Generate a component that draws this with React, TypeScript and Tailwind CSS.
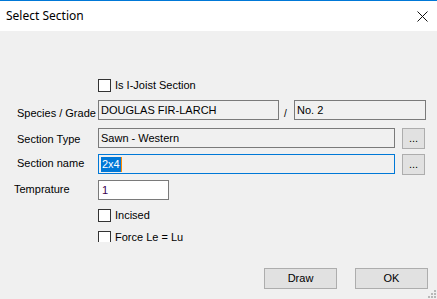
import React from 'react';

const ui = { fontFamily: '"Liberation Sans", Arial, sans-serif' };

function CheckRow({ label, top, clip }: { label: string; top: string; clip?: boolean }) {
  return (
    <div className={`flex items-start pl-[98px] ${top} ${clip ? 'h-[11px] overflow-hidden' : 'h-[13px]'}`}>
      <span className="w-[13px] h-[13px] border border-[#333333] bg-white shrink-0" />
      <span className="ml-[4px] text-[11px] leading-[13px] text-black">{label}</span>
    </div>
  );
}

function Field({ children, className }: { children?: React.ReactNode; className: string }) {
  return (
    <div className={`h-[20px] border flex items-center pl-[2px] text-[11px] text-black ${className}`}>
      {children}
    </div>
  );
}

function DotsButton() {
  return (
    <button className="ml-[7px] w-[23px] h-[21px] bg-[#e1e1e1] border border-[#adadad] text-[11px] leading-[10px] pb-[2px] text-black">
      ...
    </button>
  );
}

function Label({ text, className }: { text: string; className: string }) {
  return <span className={`w-[98px] shrink-0 text-[11px] leading-[13px] whitespace-nowrap ${className}`}>{text}</span>;
}

export default function App() {
  return (
    <div className="w-[437px] h-[299px] bg-[#f0f0f0] relative overflow-hidden" style={ui}>
      {/* Title bar */}
      <div className="h-[31px] bg-white border-t border-[#0078d7] flex items-center justify-between pl-[6px] pr-[8px]">
        <span className="text-[12px] text-black" style={{ fontFamily: '"Noto Sans", "Open Sans", sans-serif' }}>
          Select Section
        </span>
        <svg width="11" height="11" viewBox="0 0 11 11" className="mr-[1px]">
          <path d="M0.5 0.5 L10.5 10.5 M10.5 0.5 L0.5 10.5" stroke="#111" strokeWidth="1" />
        </svg>
      </div>

      <div className="flex flex-col">
        <CheckRow label="Is I-Joist Section" top="mt-[48px]" />

        {/* Species / Grade */}
        <div className="flex items-start h-[20px] mt-[8px]">
          <Label text="Species / Grade" className="pl-[17px] pt-[7px]" />
          <Field className="w-[181px] border-[#7a7a7a] bg-[#f0f0f0]">DOUGLAS FIR-LARCH</Field>
          <span className="w-[15px] pl-[5px] pt-[8px] text-[10px] leading-[12px]">/</span>
          <Field className="w-[132px] border-[#7a7a7a] bg-[#f0f0f0]">No. 2</Field>
        </div>

        {/* Section Type */}
        <div className="flex items-start h-[21px] mt-[8px]">
          <Label text="Section Type" className="pl-[17px] pt-[5px]" />
          <Field className="w-[297px] border-[#7a7a7a] bg-[#f0f0f0]">Sawn - Western</Field>
          <DotsButton />
        </div>

        {/* Section name */}
        <div className="flex items-start h-[21px] mt-[5px]">
          <Label text="Section name" className="pl-[17px] pt-[3px]" />
          <Field className="w-[297px] border-[#0078d7] bg-[#f0f0f0]">
            <span className="bg-[#0078d7] text-white px-[1px] leading-[15px]">2x4</span>
            <span className="w-[1px] h-[15px] bg-[#ff8c00]" />
          </Field>
          <DotsButton />
        </div>

        {/* Temprature */}
        <div className="flex items-start h-[20px] mt-[5px]">
          <Label text="Temprature" className="pl-[14px] pt-[3px]" />
          <Field className="w-[71px] border-[#7a7a7a] bg-white pl-[3px]">
            <span className="text-[#3a0050]">1</span>
          </Field>
        </div>

        <CheckRow label="Incised" top="mt-[9px]" />
        <CheckRow label="Force Le = Lu" top="mt-[9px]" clip />

        {/* Buttons */}
        <div className="flex justify-end gap-[18px] pr-[9px] mt-[26px]">
          <button className="w-[73px] h-[21px] bg-[#e1e1e1] border border-[#adadad] text-[11px] text-black">Draw</button>
          <button className="w-[73px] h-[21px] bg-[#e1e1e1] border border-[#adadad] text-[11px] text-black">OK</button>
        </div>
      </div>

      {/* size grip */}
      <svg width="8" height="8" viewBox="0 0 8 8" className="absolute right-[1px] bottom-[1px]">
        {[[6, 0], [6, 3], [3, 3], [6, 6], [3, 6], [0, 6]].map(([x, y], i) => (
          <rect key={i} x={x} y={y} width="2" height="2" fill="#b8b8b8" />
        ))}
      </svg>
    </div>
  );
}
